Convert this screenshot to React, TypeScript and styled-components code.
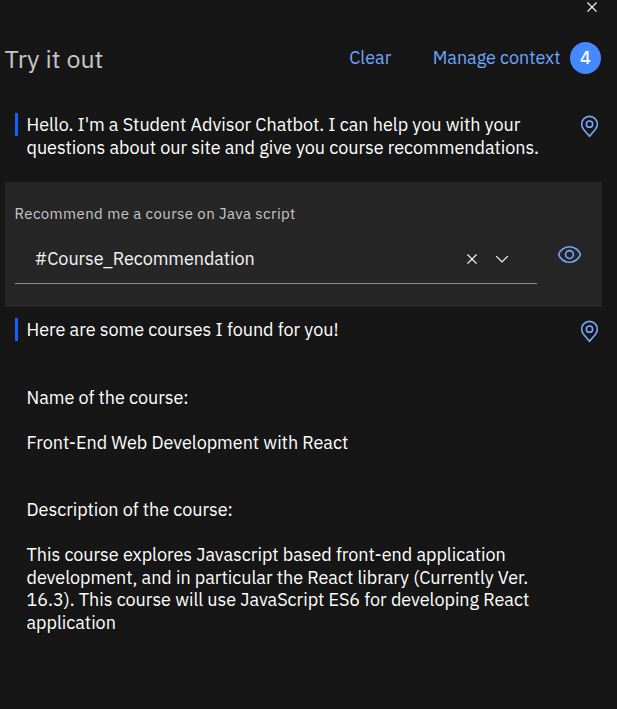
import React from "react";
import styled, { createGlobalStyle } from "styled-components";

const GlobalStyle = createGlobalStyle`
  * { box-sizing: border-box; }
  body {
    margin: 0;
    background: #161616;
    color: #ffffff;
    font-family: "IBM Plex Sans", Roboto, "Liberation Sans", sans-serif;
    font-size: 18px;
  }
  button {
    margin: 0;
    padding: 0;
    border: 0;
    background: none;
    color: inherit;
    font: inherit;
    cursor: pointer;
  }
`;

const Panel = styled.main`
  display: flex;
  flex-direction: column;
  width: 617px;
  height: 709px;
  overflow: hidden;
  background: #161616;
`;

const TopBar = styled.div`
  display: flex;
  justify-content: flex-end;
  height: 17px;
  padding-right: 15px;
`;

const IconButton = styled.button<{ $size: number; $color?: string; $top?: number }>`
  display: block;
  flex: none;
  width: ${(p) => p.$size}px;
  height: ${(p) => p.$size}px;
  margin-top: ${(p) => p.$top ?? 0}px;
  color: ${(p) => p.$color ?? "#f4f4f4"};

  svg {
    display: block;
    width: 100%;
    height: 100%;
    fill: currentColor;
  }
`;

const Header = styled.header`
  display: flex;
  align-items: center;
  height: 82px;
  padding: 0 16px 0 4.5px;
`;

const Title = styled.h1`
  flex: 1;
  margin: 1px 0 0;
  color: #c6c6c6;
  font-size: 25px;
  font-weight: 400;
  line-height: 32px;
`;

const LinkButton = styled.button`
  color: #6ea6ff;
  line-height: 24px;
  letter-spacing: -0.03px;
  white-space: nowrap;
`;

const Actions = styled.div`
  display: flex;
  align-items: center;
  gap: 41.5px;
`;

const ContextGroup = styled.div`
  display: flex;
  align-items: center;
  gap: 9.5px;
`;

const Badge = styled.span`
  display: flex;
  align-items: center;
  justify-content: center;
  width: 31px;
  height: 32px;
  padding-bottom: 1px;
  border-radius: 50%;
  background: #4589ff;
  color: #ffffff;
  font-size: 18px;
  font-weight: 500;
`;

const Message = styled.section`
  display: flex;
  align-items: flex-start;
  padding: 0 15px;
`;

const Accent = styled.span`
  flex: none;
  width: 3px;
  height: 23px;
  margin-right: 8.5px;
  background: #0f62fe;
`;

const MessageBody = styled.div`
  flex: 1;
  padding-top: 1px;
`;

const Paragraph = styled.p<{ $gap?: number }>`
  margin: ${(p) => p.$gap ?? 0}px 0 0;
  line-height: 22.5px;
`;

const Line = styled.span`
  display: block;
  letter-spacing: -0.03px;
  white-space: nowrap;
`;

const Welcome = styled(Message)`
  margin-top: 14px;
  height: 69px;
`;

const Reply = styled(Message)`
  margin-top: 11px;
`;

const IntentCard = styled.section`
  display: flex;
  flex-direction: column;
  width: 597px;
  height: 125px;
  margin-left: 5px;
  padding: 22px 20px 0 10px;
  background: #262626;
`;

const Utterance = styled.div`
  height: 20px;
  margin-left: -0.5px;
  color: #c6c6c6;
  font-size: 15px;
  line-height: 20px;
  letter-spacing: 0.4px;
`;

const IntentRow = styled.div`
  display: flex;
  justify-content: space-between;
  height: 51px;
  margin-top: 9px;
`;

const ComboBox = styled.div`
  display: flex;
  align-items: center;
  gap: 10px;
  width: 522px;
  height: 51px;
  padding: 0 25px 0 19.5px;
  border-bottom: 1px solid #8d8d8d;
`;

const ComboValue = styled.span`
  flex: 1;
  color: #f4f4f4;
  letter-spacing: -0.07px;
`;

const CloseIcon = () => (
  <svg viewBox="0 0 32 32">
    <path d="M24 9.4 22.6 8 16 14.6 9.4 8 8 9.4 14.6 16 8 22.6 9.4 24 16 17.4 22.6 24 24 22.6 17.4 16z" />
  </svg>
);

const ChevronIcon = () => (
  <svg viewBox="0 0 16 16">
    <path d="M8 11 3 6l.7-.7L8 9.6l4.3-4.3.7.7z" />
  </svg>
);

const ViewIcon = () => (
  <svg viewBox="0 0 32 32">
    <path d="M30.94,15.66A16.69,16.69,0,0,0,16,5,16.69,16.69,0,0,0,1.06,15.66a1,1,0,0,0,0,.68A16.69,16.69,0,0,0,16,27,16.69,16.69,0,0,0,30.94,16.34,1,1,0,0,0,30.94,15.66ZM16,25c-5.3,0-10.9-3.93-12.93-9C5.1,10.93,10.7,7,16,7s10.9,3.93,12.93,9C26.9,21.07,21.3,25,16,25Z" />
    <path d="M16,10a6,6,0,1,0,6,6A6,6,0,0,0,16,10Zm0,10a4,4,0,1,1,4-4A4,4,0,0,1,16,20Z" />
  </svg>
);

const LocationIcon = () => (
  <svg viewBox="0 0 32 32">
    <path d="M16,18a5,5,0,1,1,5-5A5,5,0,0,1,16,18Zm0-8a3,3,0,1,0,3,3A3,3,0,0,0,16,10Z" />
    <path d="M16,30,7.56,20.05c-.05-.06-.35-.45-.35-.45A10.89,10.89,0,0,1,5,13a11,11,0,0,1,22,0,10.88,10.88,0,0,1-2.21,6.6s-.3.39-.35.45ZM8.81,18.4s.23.31.29.37L16,26.91l6.91-8.15c.04-.06.28-.37.28-.37A8.9,8.9,0,0,0,25,13a9,9,0,1,0-18,0A8.91,8.91,0,0,0,8.81,18.4Z" />
  </svg>
);

const blue = "#78a9ff";

const greeting = [
  "Hello. I'm a Student Advisor Chatbot. I can help you with your",
  "questions about our site and give you course recommendations.",
];

const reply: { gap: number; lines: string[] }[] = [
  { gap: 0, lines: ["Here are some courses I found for you!"] },
  { gap: 45, lines: ["Name of the course:"] },
  { gap: 22.5, lines: ["Front-End Web Development with React"] },
  { gap: 45, lines: ["Description of the course:"] },
  {
    gap: 22.5,
    lines: [
      "This course explores Javascript based front-end application",
      "development, and in particular the React library (Currently Ver.",
      "16.3). This course will use JavaScript ES6 for developing React",
      "application",
    ],
  },
];

const Lines = ({ items }: { items: string[] }) => (
  <>
    {items.map((text) => (
      <Line key={text}>{text}</Line>
    ))}
  </>
);

const LocateButton = () => (
  <IconButton $size={25} $color={blue} $top={1} aria-label="Show location">
    <LocationIcon />
  </IconButton>
);

export default function App() {
  return (
    <>
      <GlobalStyle />
      <Panel>
        <TopBar>
          <IconButton $size={20} $top={-3} aria-label="Close">
            <CloseIcon />
          </IconButton>
        </TopBar>
        <Header>
          <Title>Try it out</Title>
          <Actions>
            <LinkButton>Clear</LinkButton>
            <ContextGroup>
              <LinkButton>Manage context</LinkButton>
              <Badge>4</Badge>
            </ContextGroup>
          </Actions>
        </Header>
        <Welcome>
          <Accent />
          <MessageBody>
            <Paragraph>
              <Lines items={greeting} />
            </Paragraph>
          </MessageBody>
          <LocateButton />
        </Welcome>
        <IntentCard>
          <Utterance>Recommend me a course on Java script</Utterance>
          <IntentRow>
            <ComboBox>
              <ComboValue>#Course_Recommendation</ComboValue>
              <IconButton $size={20} $top={1} aria-label="Clear selection">
                <CloseIcon />
              </IconButton>
              <IconButton $size={20} $top={1} aria-label="Open menu">
                <ChevronIcon />
              </IconButton>
            </ComboBox>
            <IconButton $size={25} $color={blue} $top={9} aria-label="View intent">
              <ViewIcon />
            </IconButton>
          </IntentRow>
        </IntentCard>
        <Reply>
          <Accent />
          <MessageBody>
            {reply.map(({ gap, lines }) => (
              <Paragraph key={lines[0]} $gap={gap}>
                <Lines items={lines} />
              </Paragraph>
            ))}
          </MessageBody>
          <LocateButton />
        </Reply>
      </Panel>
    </>
  );
}
